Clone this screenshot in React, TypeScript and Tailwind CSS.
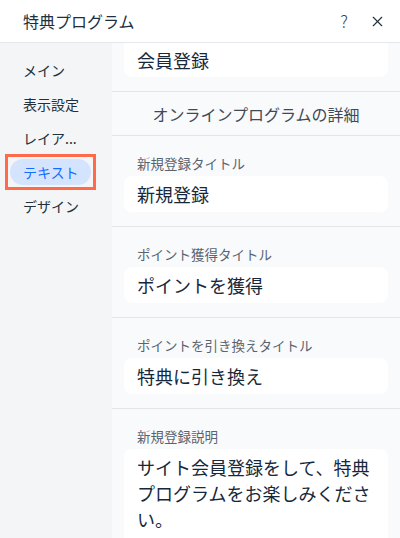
import React from 'react';
import { X } from 'lucide-react';

const navItems = ['メイン', '表示設定', 'レイア...', 'テキスト', 'デザイン'];

const fields = [
  { label: '新規登録タイトル', value: '新規登録' },
  { label: 'ポイント獲得タイトル', value: 'ポイントを獲得' },
  { label: 'ポイントを引き換えタイトル', value: '特典に引き換え' },
];

const Field: React.FC<{ label: string; value: string }> = ({ label, value }) => (
  <div className="border-b border-[#e1e6eb] px-3 pt-[18px] pb-[14px]">
    <p className="pl-[13px] text-[13.5px] leading-[18px] text-[#5a6471]">{label}</p>
    <div className="mt-1 flex h-[36px] items-center rounded-lg bg-white pl-[13px] text-[18px] text-[#17283a]">
      {value}
    </div>
  </div>
);

export default function App() {
  return (
    <div
      className="flex h-[538px] w-[400px] flex-col overflow-hidden bg-white text-[#20303c]"
      style={{ fontFamily: '"Noto Sans CJK JP", "Noto Sans", sans-serif' }}
    >
      {/* Panel header */}
      <header className="flex h-[43px] shrink-0 items-center border-b border-[#e4e8ec] pl-[23px] pr-[14px]">
        <h1 className="flex-1 text-[16px] text-[#20303c]">特典プログラム</h1>
        <span className="mr-[21px] text-[17px] font-light text-[#3a4654]">?</span>
        <X className="h-[17px] w-[17px] text-[#20303c]" strokeWidth={1.6} />
      </header>

      <div className="flex min-h-0 flex-1">
        {/* Sidebar */}
        <nav className="w-[112px] shrink-0 bg-[#f4f5f6] pt-[10px]">
          {navItems.map((item) => {
            const active = item === 'テキスト';
            return (
              <div key={item} className="relative flex h-[34px] items-center text-[14px]">
                {active ? (
                  <>
                    <span className="ml-[10px] flex h-[26px] w-[81px] items-center rounded-full bg-[#d5e4fe] pl-[13px] text-[#116dff]">
                      {item}
                    </span>
                    <span className="absolute -top-px -bottom-px left-[5px] w-[91px] border-[3px] border-[#ff6b4a]" />
                  </>
                ) : (
                  <span className="pl-[23px]">{item}</span>
                )}
              </div>
            );
          })}
        </nav>

        {/* Settings content */}
        <main className="flex-1 overflow-hidden bg-[#f9fafb]">
          <div className="border-b border-[#e1e6eb] px-3 pb-[14px]">
            <div className="flex h-[34px] items-center rounded-b-lg bg-white pl-[13px] text-[18px] text-[#17283a]">
              会員登録
            </div>
          </div>

          <div className="flex h-[44px] items-center justify-center border-b border-[#e1e6eb] text-[16px] text-[#3f4a57]">
            オンラインプログラムの詳細
          </div>

          {fields.map((f) => (
            <Field key={f.label} label={f.label} value={f.value} />
          ))}

          <div className="px-3 pt-[18px]">
            <p className="pl-[13px] text-[13.5px] leading-[18px] text-[#5a6471]">新規登録説明</p>
            <div className="mt-1 rounded-lg bg-white pt-[5px] pb-5 pl-[13px] pr-3 text-[18px] leading-[26px] text-[#17283a]">
              サイト会員登録をして、特典プログラムをお楽しみください。
            </div>
          </div>
        </main>
      </div>
    </div>
  );
}
